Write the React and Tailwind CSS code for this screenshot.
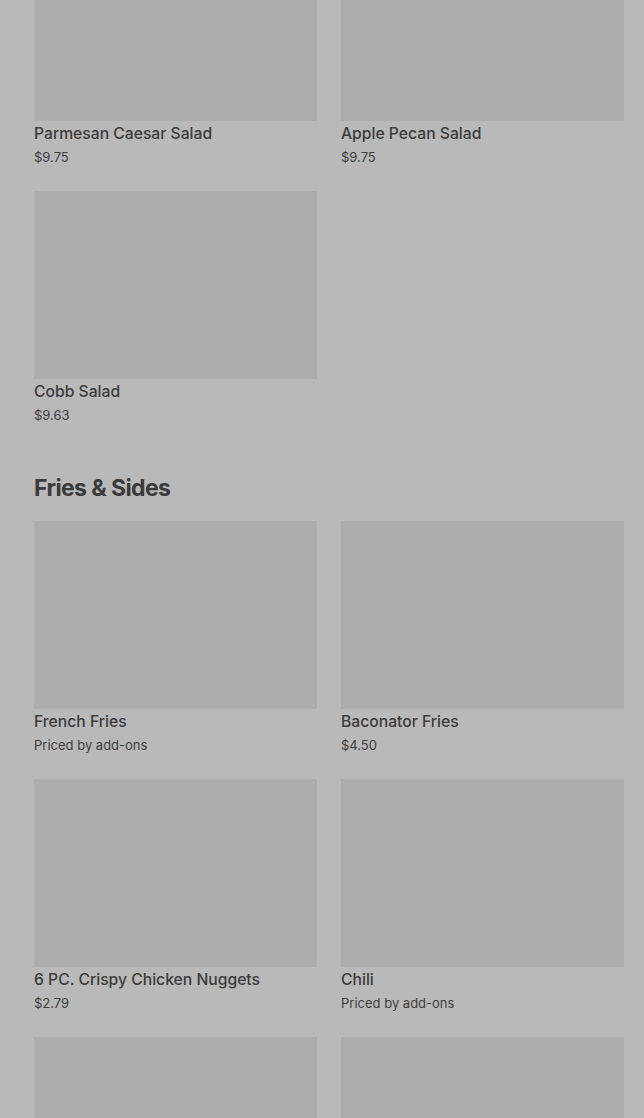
const salads = [
  { name: "Parmesan Caesar Salad", price: "$9.75" },
  { name: "Apple Pecan Salad", price: "$9.75" },
  { name: "Cobb Salad", price: "$9.63" },
];

const sides = [
  { name: "French Fries", price: "Priced by add-ons" },
  { name: "Baconator Fries", price: "$4.50" },
  { name: "6 PC. Crispy Chicken Nuggets", price: "$2.79" },
  { name: "Chili", price: "Priced by add-ons" },
];

function ItemCard({ item }) {
  return (
    <div className="min-w-0">
      <div className="h-[188px] w-full bg-[#adadad]" />
      {item && (
        <>
          <div className="mt-[3px] text-[15.7px] font-medium leading-5 text-[#3c3c3c]">
            {item.name}
          </div>
          <div className="mt-[5px] text-[13px] leading-4 text-[#3e3e3e]">
            {item.price}
          </div>
        </>
      )}
    </div>
  );
}

export default function App() {
  return (
    <div
      className="h-[1118px] w-full overflow-hidden bg-[#b9b9b9]"
      style={{ fontFamily: "Inter, Roboto, 'Liberation Sans', sans-serif" }}
    >
      <div className="-mt-[67px] pl-[34px] pr-[20px]">
        <section>
          <div className="grid grid-cols-2 gap-x-[24px] gap-y-[26px]">
            {salads.map((item) => (
              <ItemCard item={item} key={item.name} />
            ))}
          </div>
        </section>

        <section className="mt-[49px]">
          <h2 className="text-[23px] font-bold leading-8 tracking-[-0.6px] text-[#3a3a3a]">
            Fries &amp; Sides
          </h2>
          <div className="mt-[17px] grid grid-cols-2 gap-x-[24px] gap-y-[26px]">
            {sides.map((item) => (
              <ItemCard item={item} key={item.name} />
            ))}
            <ItemCard />
            <ItemCard />
          </div>
        </section>
      </div>
    </div>
  );
}
